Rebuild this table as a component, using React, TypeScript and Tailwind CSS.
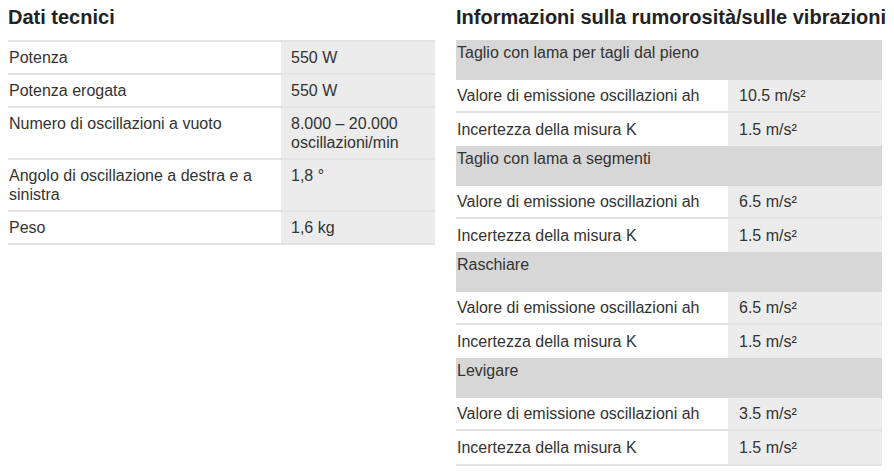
const techData: [string, string][] = [
  ['Potenza', '550 W'],
  ['Potenza erogata', '550 W'],
  ['Numero di oscillazioni a vuoto', '8.000 – 20.000 oscillazioni/min'],
  ['Angolo di oscillazione a destra e a sinistra', '1,8 °'],
  ['Peso', '1,6 kg'],
];

const vibrationGroups = [
  { title: 'Taglio con lama per tagli dal pieno', ah: '10.5 m/s²', k: '1.5 m/s²' },
  { title: 'Taglio con lama a segmenti', ah: '6.5 m/s²', k: '1.5 m/s²' },
  { title: 'Raschiare', ah: '6.5 m/s²', k: '1.5 m/s²' },
  { title: 'Levigare', ah: '3.5 m/s²', k: '1.5 m/s²' },
];

function Heading({ children }: { children: string }) {
  return (
    <h2 className="pt-[5px] mb-[11px] text-[20px] leading-[24px] font-bold text-[#222] whitespace-nowrap">
      {children}
    </h2>
  );
}

export default function App() {
  return (
    <div
      className="flex w-[894px] h-[471px] bg-white pl-[8px] gap-[21px] text-[#333] text-[16px] leading-[19px]"
      style={{ fontFamily: '"Liberation Sans", Arial, sans-serif' }}
    >
      {/* Dati tecnici */}
      <div className="w-[427px]">
        <Heading>Dati tecnici</Heading>
        <div className="border-t-2 border-[#e3e3e3]">
          {techData.map(([label, value]) => (
            <div key={label} className="flex border-b-2 border-[#e3e3e3]">
              <div className="w-[273px] py-[6px] pl-[1px] pr-[12px]">{label}</div>
              <div className="flex-1 bg-[#ececec] py-[6px] pl-[10px] pr-[12px]">{value}</div>
            </div>
          ))}
        </div>
      </div>

      {/* Rumorosità / vibrazioni */}
      <div className="w-[426px]">
        <Heading>Informazioni sulla rumorosità/sulle vibrazioni</Heading>
        <div>
          {vibrationGroups.map((g, i) => (
            <div key={g.title}>
              <div className="h-[40px] bg-[#d7d7d7] pt-[3px] pl-[1px]">{g.title}</div>
              <div className="flex border-b-2 border-[#e3e3e3]">
                <div className="w-[272px] py-[6px] pl-[1px]">Valore di emissione oscillazioni ah</div>
                <div className="flex-1 bg-[#ececec] py-[6px] pl-[11px]">{g.ah}</div>
              </div>
              <div
                className={
                  i === vibrationGroups.length - 1
                    ? 'flex border-b-2 border-[#e3e3e3]'
                    : 'flex'
                }
              >
                <div className="w-[272px] py-[7px] pl-[1px]">Incertezza della misura K</div>
                <div className="flex-1 bg-[#ececec] py-[7px] pl-[11px]">{g.k}</div>
              </div>
            </div>
          ))}
        </div>
      </div>
    </div>
  );
}
